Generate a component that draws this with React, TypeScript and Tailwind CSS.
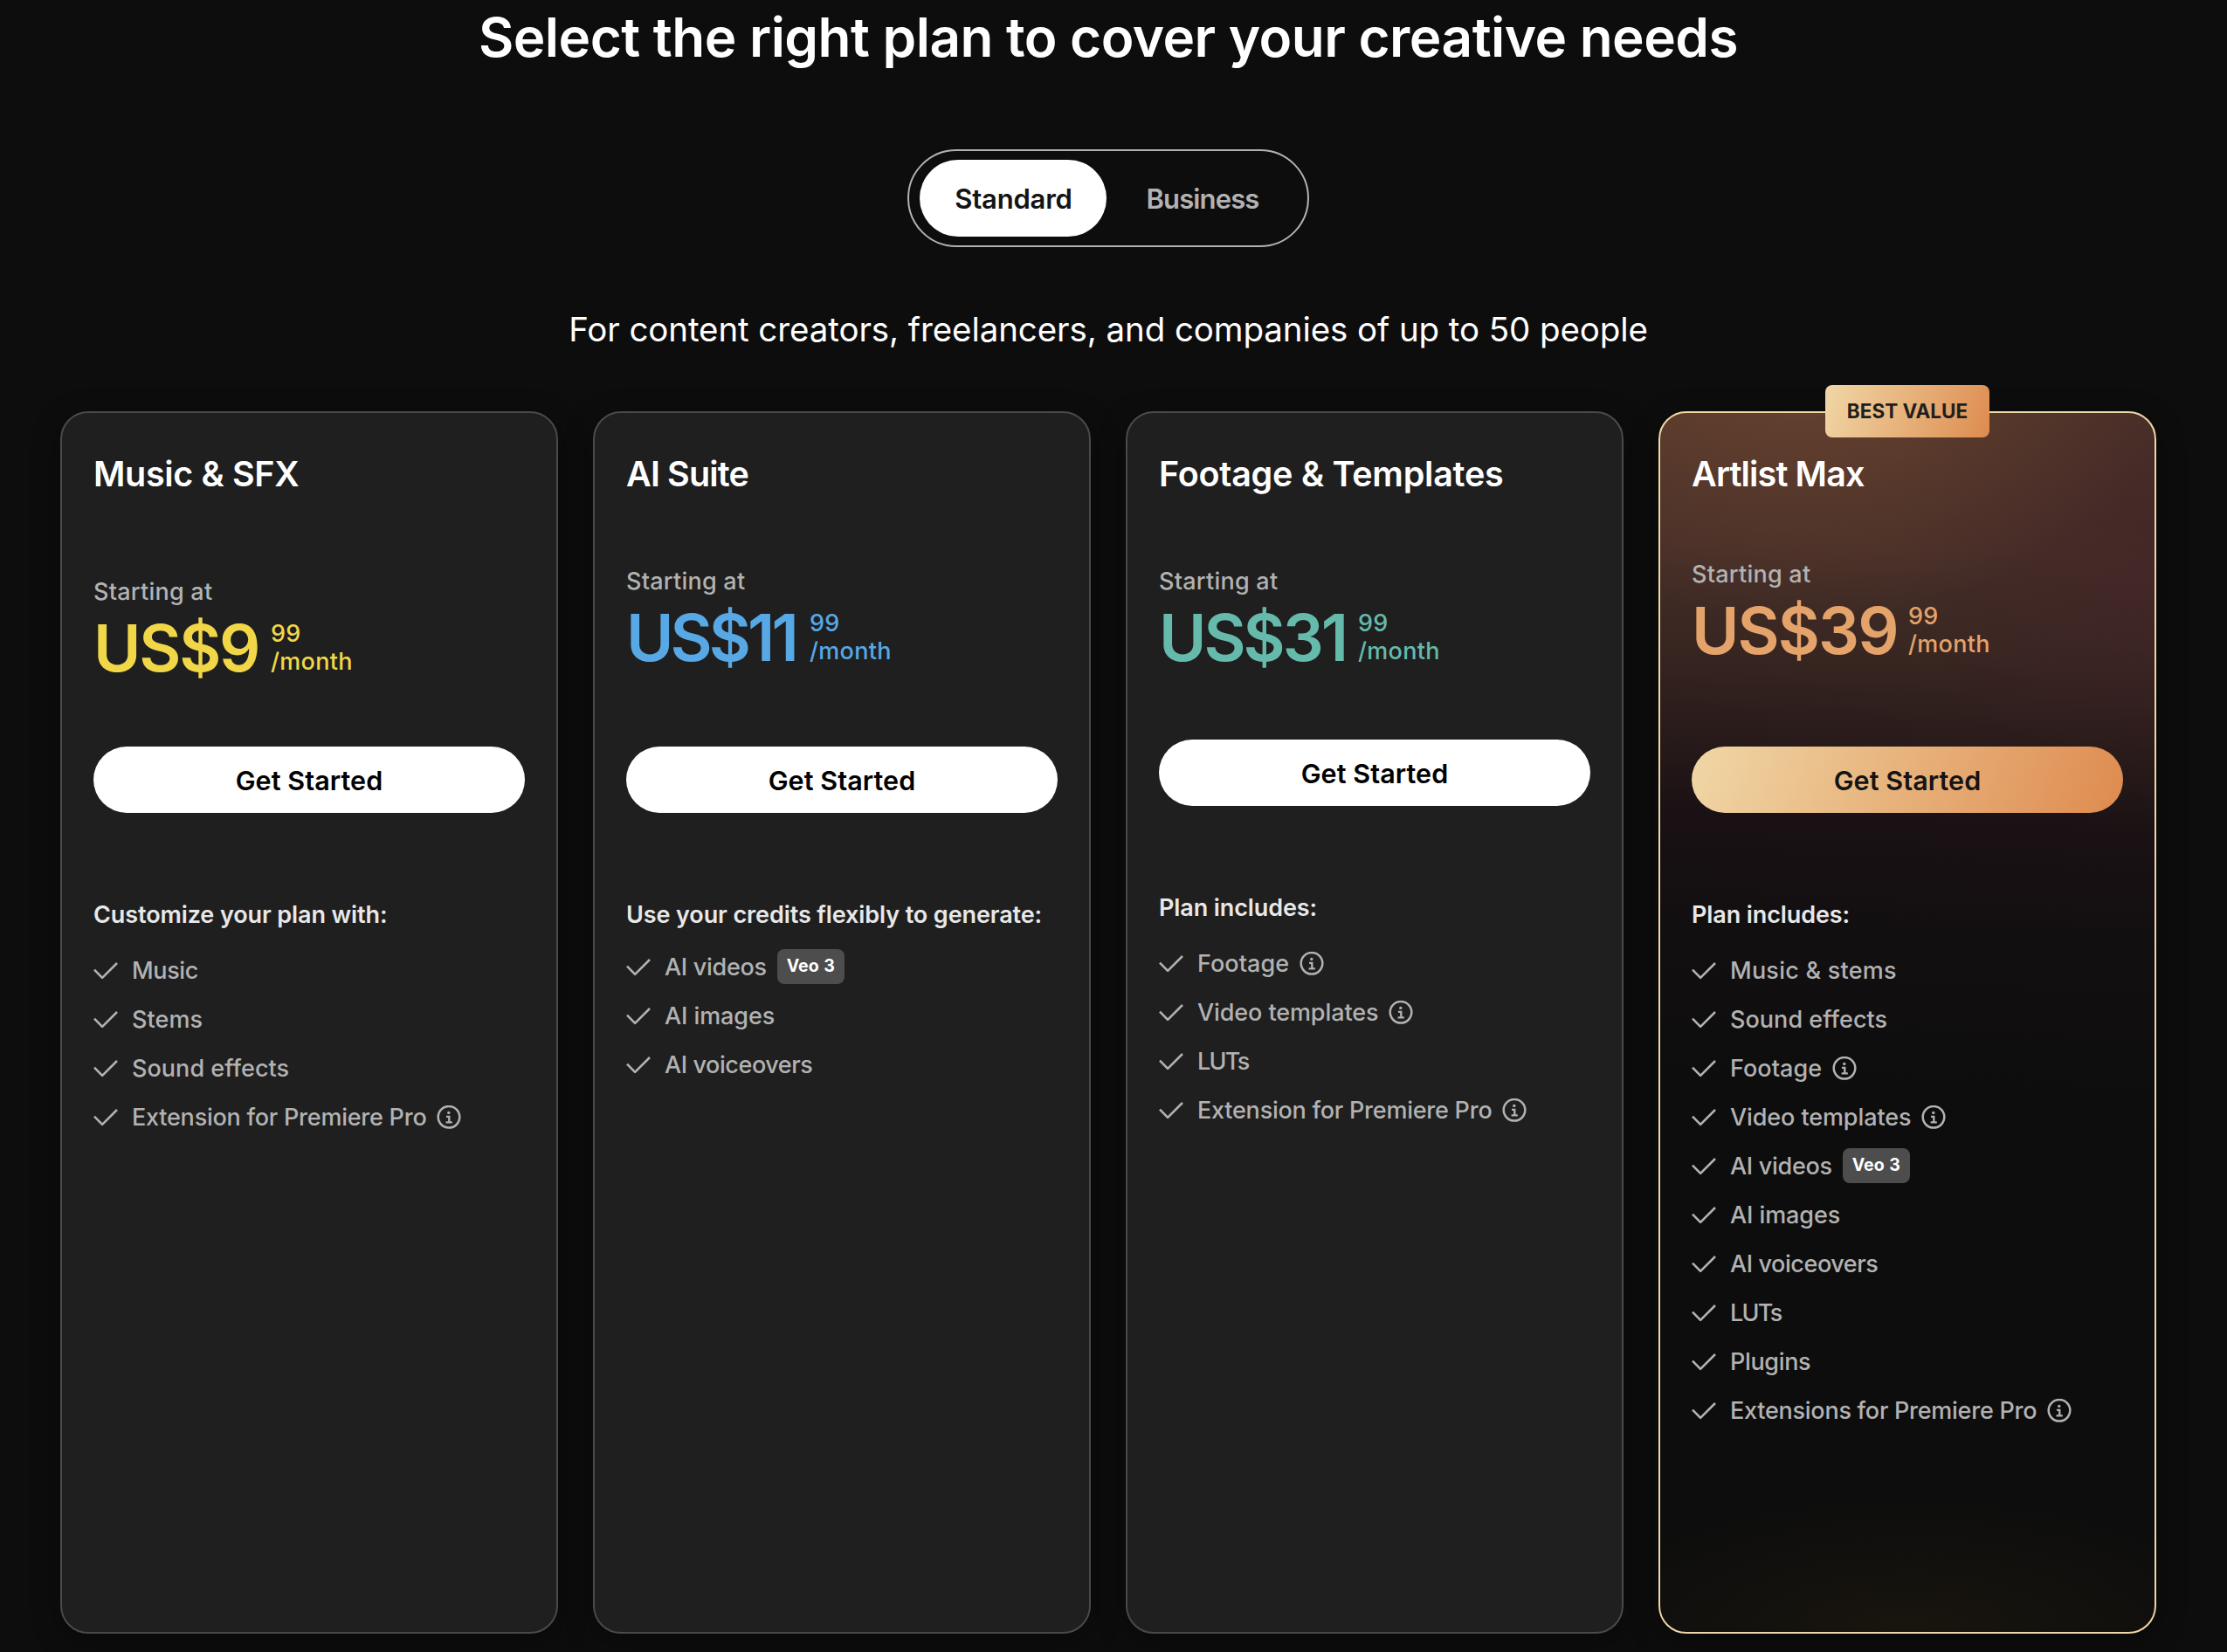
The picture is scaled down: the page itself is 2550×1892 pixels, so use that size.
import { useState } from "react";
import { clsx } from "clsx";

type Feature = {
  label: string;
  info?: boolean;
  tag?: string;
  tracking?: string;
};

type Plan = {
  name: string;
  nameClass: string;
  price: string;
  priceClass: string;
  colorClass: string;
  startClass: string;
  buttonClass: string;
  listTitle: string;
  listClass: string;
  features: Feature[];
  best?: boolean;
};

const PLANS: Plan[] = [
  {
    name: "Music & SFX",
    nameClass: "tracking-[-0.35px]",
    price: "US$9",
    priceClass: "w-[203px] tracking-[-2.2px]",
    colorClass: "text-[#f1d748]",
    startClass: "mt-[95px]",
    buttonClass: "mt-[77px]",
    listTitle: "Customize your plan with:",
    listClass: "mt-[18px]",
    features: [
      { label: "Music", tracking: "tracking-[-0.35px]" },
      { label: "Stems", tracking: "tracking-[0.05px]" },
      { label: "Sound effects", tracking: "tracking-[0.04px]" },
      { label: "Extension for Premiere Pro", info: true, tracking: "tracking-[-0.24px]" },
    ],
  },
  {
    name: "AI Suite",
    nameClass: "tracking-[-0.85px]",
    price: "US$11",
    priceClass: "w-[210px] tracking-[-3.9px]",
    colorClass: "text-[#57a8e4]",
    startClass: "mt-[83px]",
    buttonClass: "mt-[89px]",
    listTitle: "Use your credits flexibly to generate:",
    listClass: "mt-[14px]",
    features: [
      { label: "AI videos", tag: "Veo 3", tracking: "tracking-[-0.3px]" },
      { label: "AI images", tracking: "tracking-[-0.08px]" },
      { label: "AI voiceovers", tracking: "tracking-[-0.42px]" },
    ],
  },
  {
    name: "Footage & Templates",
    nameClass: "tracking-[-0.25px]",
    price: "US$31",
    priceClass: "w-[228px] tracking-[-3px]",
    colorClass: "text-[#65baac]",
    startClass: "mt-[83px]",
    buttonClass: "mt-[81px]",
    listTitle: "Plan includes:",
    listClass: "mt-[18px]",
    features: [
      { label: "Footage", info: true, tracking: "tracking-[0.05px]" },
      { label: "Video templates", info: true, tracking: "tracking-[-0.1px]" },
      { label: "LUTs", tracking: "tracking-[-1.7px]" },
      { label: "Extension for Premiere Pro", info: true, tracking: "tracking-[-0.24px]" },
    ],
  },
  {
    name: "Artlist Max",
    nameClass: "tracking-[-0.85px]",
    price: "US$39",
    priceClass: "w-[248px] tracking-[-1.9px]",
    colorClass: "text-[#e4a36a]",
    startClass: "mt-[75px]",
    buttonClass: "mt-[97px]",
    listTitle: "Plan includes:",
    listClass: "mt-[18px]",
    best: true,
    features: [
      { label: "Music & stems", tracking: "tracking-[0.24px]" },
      { label: "Sound effects", tracking: "tracking-[0.04px]" },
      { label: "Footage", info: true, tracking: "tracking-[0.05px]" },
      { label: "Video templates", info: true, tracking: "tracking-[-0.1px]" },
      { label: "AI videos", tag: "Veo 3", tracking: "tracking-[-0.3px]" },
      { label: "AI images", tracking: "tracking-[-0.08px]" },
      { label: "AI voiceovers", tracking: "tracking-[-0.42px]" },
      { label: "LUTs", tracking: "tracking-[-1.7px]" },
      { label: "Plugins", tracking: "tracking-[-0.35px]" },
      { label: "Extensions for Premiere Pro", info: true, tracking: "tracking-[-0.26px]" },
    ],
  },
];

function CheckIcon() {
  return (
    <svg
      className="h-6 w-7 shrink-0"
      viewBox="0 0 28 24"
      fill="none"
      stroke="currentColor"
      strokeWidth="2.6"
      strokeLinejoin="round"
    >
      <path d="M1 10.6 10.1 19.8 27 3" />
    </svg>
  );
}

function InfoIcon() {
  return (
    <svg
      className="h-7 w-7 shrink-0"
      viewBox="0 0 28 28"
      fill="none"
      stroke="currentColor"
    >
      <circle cx="14" cy="13.3" r="12.3" strokeWidth="2.5" />
      <circle cx="13.8" cy="8.4" r="1.7" fill="currentColor" stroke="none" />
      <path d="M11 12.9h3.3v6.3M10.6 19.3h7.2" strokeWidth="2.3" />
    </svg>
  );
}

function FeatureRow({ feature }: { feature: Feature }) {
  return (
    <li className="flex h-14 items-center text-[27px] font-[450] text-[#b2b2b2]">
      <CheckIcon />
      <span className={clsx("ml-4 whitespace-nowrap", feature.tracking)}>
        {feature.label}
      </span>
      {feature.info && (
        <button className="ml-3" aria-label="More info">
          <InfoIcon />
        </button>
      )}
      {feature.tag && (
        <span className="mb-0.5 ml-3 flex h-10 w-[77px] items-center justify-center rounded-lg bg-[#4d4d4d] pb-px text-[19.5px] font-bold whitespace-nowrap text-white [word-spacing:1px]">
          {feature.tag}
        </span>
      )}
    </li>
  );
}

function PlanCard({ plan }: { plan: Plan }) {
  return (
    <section
      className={clsx(
        "relative flex h-[1400px] flex-1 flex-col rounded-[32px] border-2 px-9 pt-[46px] shadow-[0_8px_32px_rgba(0,0,0,0.35)]",
        plan.best
          ? "border-[#f0d7a6] bg-[radial-gradient(440px_290px_at_28%_-4%,rgba(124,74,52,0.6),transparent),radial-gradient(310px_340px_at_100%_8%,rgba(62,22,38,0.32),transparent),radial-gradient(400px_160px_at_50%_100%,rgba(50,38,16,0.32),transparent),linear-gradient(183deg,#4a3528_0%,#462f28_12%,#3a2722_20%,#2a1c1b_27%,#1a1114_34%,#120f11_43%,#0d0d0d_58%)] bg-origin-border"
          : "border-[#4a4a4a] bg-[#1f1f1f]"
      )}
    >
      {plan.best && (
        <span className="absolute -top-8 left-1/2 flex h-[60px] w-[188px] -translate-x-1/2 items-center justify-center rounded-lg bg-[linear-gradient(110deg,#f0d7a6,#de8b4f)] text-[22.5px] font-bold whitespace-nowrap text-[#1f1f1f]">
          BEST VALUE
        </span>
      )}

      <h2
        className={clsx(
          "text-[39.5px] leading-[48px] font-semibold whitespace-nowrap text-white",
          plan.nameClass
        )}
      >
        {plan.name}
      </h2>

      <p
        className={clsx(
          "text-[27px] leading-8 font-[450] tracking-[0.24px] text-[#b2b2b2]",
          plan.startClass
        )}
      >
        Starting at
      </p>
      <div className={clsx("mt-3 flex h-[72px]", plan.colorClass)}>
        <span
          className={clsx(
            "shrink-0 text-[74px] leading-[72px] font-semibold",
            plan.priceClass
          )}
        >
          {plan.price}
        </span>
        <span className="flex flex-col pt-1 text-[27px] leading-8 font-[450] tracking-[0.3px]">
          <span>99</span>
          <span>/month</span>
        </span>
      </div>

      <button
        className={clsx(
          "h-[76px] shrink-0 rounded-full pt-px text-[30.5px] font-semibold tracking-[0.08px]",
          plan.best
            ? "bg-[linear-gradient(110deg,#f0d7a6,#de8b4f)] text-[#141414]"
            : "bg-white text-black",
          plan.buttonClass
        )}
      >
        Get Started
      </button>

      <h3 className="mt-[99px] text-[27px] leading-9 font-semibold tracking-[-0.1px] whitespace-nowrap text-[#e8e8e8]">
        {plan.listTitle}
      </h3>
      <ul className={plan.listClass}>
        {plan.features.map((feature) => (
          <FeatureRow key={feature.label} feature={feature} />
        ))}
      </ul>
    </section>
  );
}

export default function App() {
  const [tab, setTab] = useState("Standard");

  return (
    <main className="flex h-[1892px] flex-col items-center overflow-hidden bg-[#0d0d0d] pt-[7px] pr-[81px] pl-[69px] font-['Inter',sans-serif]">
      <h1 className="text-[62px] leading-[72px] font-semibold tracking-[-0.52px] whitespace-nowrap text-white">
        Select the right plan to cover your creative needs
      </h1>

      <div className="mt-[92px] flex h-28 w-[460px] rounded-full border-2 border-[#b2b2b2] py-2.5 pr-2.5 pl-3">
        {["Standard", "Business"].map((name) => (
          <button
            key={name}
            onClick={() => setTab(name)}
            className={clsx(
              "rounded-full pt-0.5 text-[31px] font-semibold",
              name === "Standard"
                ? "w-[214px] pl-px tracking-[-0.2px]"
                : "flex-1 tracking-[-0.85px]",
              tab === name ? "bg-white text-[#141414]" : "text-[#b2b2b2]"
            )}
          >
            {name}
          </button>
        ))}
      </div>

      <p className="mt-[70px] text-[38.5px] leading-[48px] tracking-[-0.09px] whitespace-nowrap text-white">
        For content creators, freelancers, and companies of up to 50 people
      </p>

      <div className="mt-[70px] flex w-full gap-10">
        {PLANS.map((plan) => (
          <PlanCard key={plan.name} plan={plan} />
        ))}
      </div>
    </main>
  );
}
